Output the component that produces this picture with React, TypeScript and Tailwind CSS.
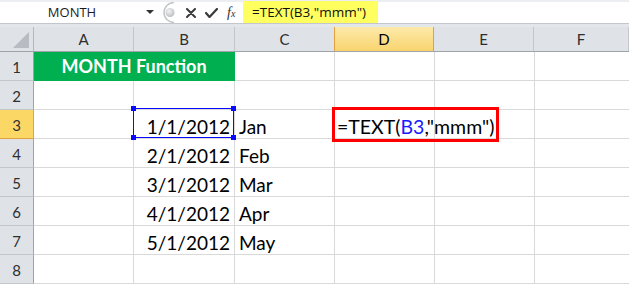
import React from 'react';

const COLS = ['A', 'B', 'C', 'D', 'E', 'F'];
const WIDTHS = ['w-[100px]', 'w-[101px]', 'w-[100px]', 'w-[100px]', 'w-[100px]', 'flex-1'];

const rows: { b?: string; c?: string }[] = [
  {},
  {},
  { b: '1/1/2012', c: 'Jan' },
  { b: '2/1/2012', c: 'Feb' },
  { b: '3/1/2012', c: 'Mar' },
  { b: '4/1/2012', c: 'Apr' },
  { b: '5/1/2012', c: 'May' },
  {},
];

const cellFont = { fontFamily: 'Lato, "Open Sans", sans-serif' };

const FormulaBar: React.FC = () => (
  <div className="h-[27px] bg-[#e3e6ea] flex flex-col">
    <div className="h-[2px] bg-[#eceef1]" />
    <div className="h-[21px] bg-white flex items-stretch">
      <div className="w-[160px] flex items-center relative" style={{ fontFamily: '"Open Sans", sans-serif' }}>
        <span className="w-[142px] text-center text-[13px] text-[#1b1b1b] pt-[1px] pl-[2px]">MONTH</span>
        <svg width="8" height="5" viewBox="0 0 8 5" className="ml-[4px]">
          <path d="M0 0 L8 0 L4 4 Z" fill="#333" />
        </svg>
      </div>
      <div className="w-[20px] flex items-center">
        <svg width="20" height="21" viewBox="0 0 20 21">
          <defs>
            <radialGradient id="knob" cx="40%" cy="35%" r="70%">
              <stop offset="0%" stopColor="#f4f4f4" />
              <stop offset="100%" stopColor="#b9bcc0" />
            </radialGradient>
          </defs>
          <path d="M14 0.5 A10 10 0 0 0 14 20.5" fill="none" stroke="#c2c5c9" strokeWidth="1.5" />
          <circle cx="10" cy="10.5" r="4.5" fill="url(#knob)" />
        </svg>
      </div>
      <div className="flex items-center gap-[9px] pl-[6px] w-[63px]">
        <svg width="10" height="10" viewBox="0 0 10 10">
          <path d="M1 1 L9 9 M9 1 L1 9" stroke="#3a3a3a" strokeWidth="2" strokeLinecap="round" />
        </svg>
        <svg width="13" height="10" viewBox="0 0 13 10">
          <path d="M1 5 L4.5 9 L12 1" stroke="#3a3a3a" strokeWidth="2.2" fill="none" strokeLinecap="round" strokeLinejoin="round" />
        </svg>
        <span className="text-[14px] italic text-[#333] leading-none" style={{ fontFamily: '"Liberation Serif", serif' }}>
          f<span className="text-[10px]">x</span>
        </span>
      </div>
      <div
        className="w-[135px] -mt-[1px] h-[23px] bg-[#ffff60] flex items-center pl-[9px] text-[13.5px] text-[#111]"
        style={{ fontFamily: '"Open Sans", sans-serif' }}
      >
        =TEXT(B3,"mmm")
      </div>
      <div className="flex-1" />
    </div>
    <div className="h-[1px] bg-[#c3c7cc]" />
  </div>
);

const App: React.FC = () => {
  return (
    <div className="w-[629px] h-[284px] bg-white overflow-hidden relative" style={cellFont}>
      <FormulaBar />

      {/* column headers */}
      <div className="flex h-[25px] bg-[#dfe3e8] border-b border-[#9ea4ab]">
        <div className="w-[34px] border-r border-[#b4b9bf] flex items-end justify-end pr-[4px] pb-[3px]">
          <svg width="16" height="16" viewBox="0 0 16 16">
            <path d="M16 0 L16 16 L0 16 Z" fill="#b7bcc2" />
          </svg>
        </div>
        {COLS.map((c, i) => (
          <div
            key={c}
            className={`${WIDTHS[i]} flex items-center justify-center text-[15px] ${
              c === 'D'
                ? 'bg-gradient-to-b from-[#fde9a9] to-[#f9d46d] border-r border-l border-[#e3a23d] -ml-[1px]'
                : 'border-r border-[#c3c7cc] text-[#2e2e2e]'
            }`}
          >
            {c}
          </div>
        ))}
      </div>

      {/* rows */}
      {rows.map((r, idx) => {
        const n = idx + 1;
        return (
          <div key={n} className="flex h-[29px]">
            <div
              className={`w-[34px] flex items-center justify-center pt-[3px] text-[15px] border-r ${
                n === 3
                  ? 'bg-[#fbd866] border-[#e3a23d] border-b text-[#333]'
                  : 'bg-[#dfe3e8] border-r-[#9ea4ab] border-b border-b-[#c3c7cc] text-[#2e2e2e]'
              }`}
            >
              {n}
            </div>
            {n === 1 ? (
              <div className="w-[201px] bg-[#00b050] border-r border-b border-[#00b050] flex items-center justify-center pt-[1px] text-[18px] font-bold text-white">
                MONTH Function
              </div>
            ) : (
              <>
                <div className="w-[100px] border-r border-b border-[#d9d9d9]" />
                <div className="w-[101px] border-r border-b border-[#d9d9d9] flex items-end justify-end pr-[4px] pb-[2px] text-[19px] leading-none text-black">
                  {r.b}
                </div>
              </>
            )}
            <div className="w-[100px] border-r border-b border-[#d9d9d9] flex items-end pl-[4px] pb-[2px] text-[19px] leading-none text-black">
              {r.c}
            </div>
            <div className="w-[100px] border-r border-b border-[#d9d9d9] relative">
              {n === 3 && (
                <span className="absolute left-[2px] bottom-[2px] text-[19.5px] leading-none text-black whitespace-nowrap">
                  =TEXT(<span className="text-[#1a1aff]">B3</span>,"mmm")
                </span>
              )}
            </div>
            <div className="w-[100px] border-r border-b border-[#d9d9d9]" />
            <div className="flex-1 border-b border-[#d9d9d9]" />
          </div>
        );
      })}

      {/* selection on B3 */}
      <div className="absolute left-[133px] top-[108px] w-[101px] h-[30px] border border-[#0a0aff]">
        <div className="absolute -left-[3px] -top-[3px] w-[5px] h-[5px] bg-[#0a0aff]" />
        <div className="absolute -right-[3px] -top-[3px] w-[5px] h-[5px] bg-[#0a0aff]" />
        <div className="absolute -left-[3px] -bottom-[3px] w-[5px] h-[5px] bg-[#0a0aff]" />
        <div className="absolute -right-[3px] -bottom-[3px] w-[5px] h-[5px] bg-[#0a0aff]" />
      </div>

      {/* red highlight around formula */}
      <div className="absolute left-[332px] top-[107px] w-[167px] h-[35px] border-[3px] border-[#ff0000]" />
    </div>
  );
};

export default App;
